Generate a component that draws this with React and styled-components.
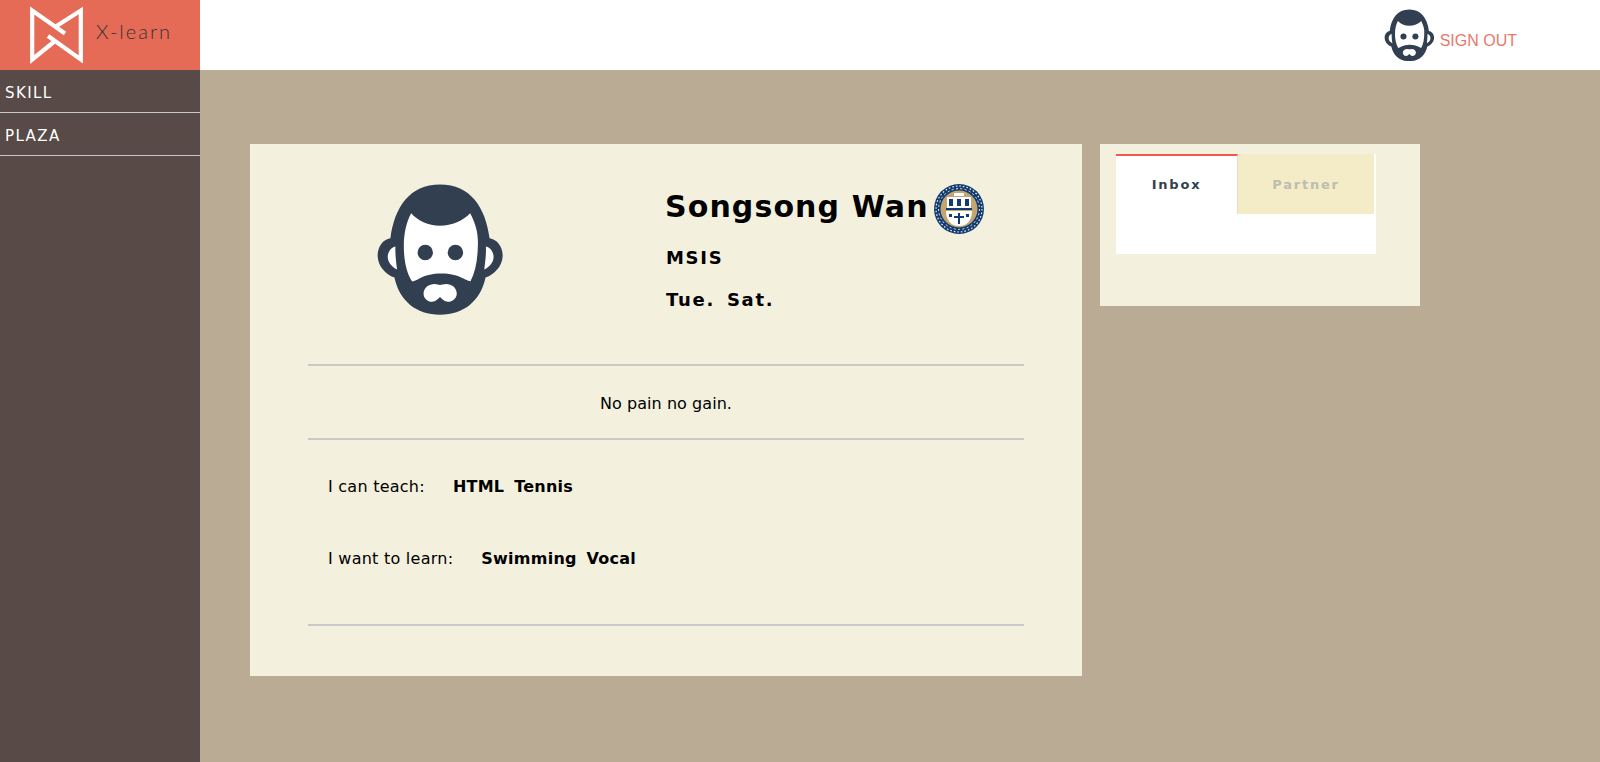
import React from "react";
import styled, { createGlobalStyle } from "styled-components";

const colors = {
  sand: "#b9ab94",
  cream: "#f3f0de",
  coral: "#e56b57",
  sidebar: "#574a47",
  slate: "#323f50",
  rule: "#c9c9c9",
};

const GlobalStyle = createGlobalStyle`
  html, body { margin: 0; padding: 0; height: 100%; }
  body {
    background: ${colors.sand};
    font-family: "DejaVu Sans", Verdana, sans-serif;
    color: #000;
  }
`;

function Face({ size }) {
  return (
    <svg width={size} height={size * 1.03} viewBox="50 38 385 396" aria-hidden="true">
      <path
        fill={colors.slate}
        d="M241 42C150 42 105 110 93 203C70 206 54 230 55 256C56 285 78 310 105 320C120 390 170 431 241 431C312 431 362 390 377 320C404 310 427 285 428 256C429 230 412 206 389 203C377 110 332 42 241 42Z"
      />
      <path
        fill="#fff"
        d="M155 128C175 150 205 165 241 165C277 165 310 150 331 128C348 160 356 190 354 225C353 265 348 300 332 331C315 330 300 308 245 308C190 308 175 330 158 332C140 305 133 265 133 225C133 190 140 155 155 128Z"
      />
      <circle cx="197" cy="245" r="23" fill={colors.slate} />
      <circle cx="287" cy="245" r="23" fill={colors.slate} />
      <path
        fill="#fff"
        d="M192 368C192 350 208 339 225 339C232 339 237 342 241 342C245 342 252 339 259 339C276 339 291 350 291 368C291 382 278 392 265 392C254 392 247 384 241 378C235 384 228 392 217 392C204 392 192 382 192 368Z"
      />
      <path fill="#fff" d="M108 227C94 230 85 245 85 258C85 275 97 288 113 296C110 275 107 250 108 227Z" />
      <path fill="#fff" d="M378 227C392 230 401 245 401 258C401 275 389 288 373 296C376 275 379 250 378 227Z" />
    </svg>
  );
}

function LogoMark() {
  return (
    <svg width="53" height="58" viewBox="0 0 53 58" aria-hidden="true">
      <g fill="none" stroke="#fff" strokeWidth="4.2" strokeLinejoin="miter">
        <path d="M35 27.5L2.2 4.5V53.5L25 35" />
        <path d="M18 30L50.8 53.5V4.5L25 21" />
      </g>
    </svg>
  );
}

function Seal() {
  return (
    <svg width="50" height="50" viewBox="0 0 50 50" aria-hidden="true">
      <circle cx="25" cy="25" r="25" fill="#123a73" />
      <circle cx="25" cy="25" r="23" fill="none" stroke="#f3f0de" strokeWidth="1.2" strokeDasharray="1.6 2" />
      <circle cx="25" cy="25" r="20.4" fill="none" stroke="#f3f0de" strokeWidth="1" strokeDasharray="2 2.4" />
      <circle cx="25" cy="25" r="18.5" fill="#c2a56f" />
      <path fill="#fff" d="M20 9h10v3h-10z" />
      <path fill="#fff" d="M13 13h24v11H13z" />
      <path fill="#123a73" d="M15 15h4v7h-4zM23 15h4v7h-4zM31 15h4v7h-4z" />
      <path fill="#123a73" d="M12 24h26v2H12z" />
      <path fill="#fff" d="M12 27h26c0 9-5 15-13 15s-13-6-13-15z" />
      <path fill="#123a73" d="M24 29h2v11h-2zM20 32h10v2H20zM15 30h3v3h-3zM32 30h3v3h-3z" />
    </svg>
  );
}

const Page = styled.div`
  display: grid;
  grid-template-columns: 200px 1fr;
  grid-template-rows: 70px 1fr;
  height: 762px;
  overflow: hidden;
`;

const Brand = styled.div`
  background: ${colors.coral};
  display: flex;
  align-items: center;
  padding-left: 30px;
  gap: 13px;
`;

const BrandName = styled.span`
  font-family: Lato, sans-serif;
  font-weight: 300;
  font-size: 20px;
  letter-spacing: 2px;
  color: #333;
  margin-top: -8px;
`;

const TopBar = styled.header`
  background: #fff;
  display: flex;
  justify-content: flex-end;
  align-items: center;
  padding-right: 83px;
  gap: 5px;
`;

const SignOut = styled.a`
  font-family: "Liberation Sans", Arial, sans-serif;
  font-size: 16px;
  color: #e8796a;
  margin-top: 11px;
`;

const Sidebar = styled.nav`
  background: ${colors.sidebar};
`;

const NavItem = styled.div`
  height: 40px;
  padding-top: 2px;
  line-height: 42px;
  padding-left: 5px;
  font-size: 15px;
  letter-spacing: 1.4px;
  color: #fff;
  border-bottom: 1px solid ${colors.rule};
`;

const Main = styled.main`
  display: flex;
  align-items: flex-start;
  gap: 18px;
  padding: 74px 0 0 50px;
`;

const ProfileCard = styled.section`
  width: 832px;
  height: 532px;
  background: ${colors.cream};
  padding: 0 58px;
  box-sizing: border-box;
`;

const Intro = styled.div`
  display: flex;
  height: 222px;
  padding-top: 40px;
  box-sizing: border-box;
  border-bottom: 2px solid ${colors.rule};
`;

const AvatarSlot = styled.div`
  width: 357px;
  padding-left: 68px;
  margin-top: -1px;
  box-sizing: border-box;
`;

const Details = styled.div`
  display: flex;
  flex-direction: column;
`;

const NameRow = styled.div`
  display: flex;
  align-items: flex-start;
  gap: 5px;
`;

const Name = styled.h1`
  margin: 0;
  font-size: 30px;
  font-weight: 700;
  letter-spacing: 1.1px;
  line-height: 46px;
`;

const Fact = styled.p`
  margin: ${(p) => p.$gap}px 0 0 1px;
  font-size: 18px;
  font-weight: 700;
  letter-spacing: 1.7px;
  word-spacing: 4px;
  line-height: 20px;
`;

const Motto = styled.p`
  margin: 0;
  height: 72px;
  line-height: 76px;
  text-align: center;
  font-size: 16px;
  letter-spacing: 0.05px;
  border-bottom: 2px solid ${colors.rule};
`;

const Skills = styled.div`
  height: 186px;
  padding: 11px 0 0 20px;
  box-sizing: border-box;
  border-bottom: 2px solid ${colors.rule};
`;

const SkillRow = styled.div`
  display: flex;
  height: 71.5px;
  align-items: center;
  font-size: 16px;
  letter-spacing: 0.25px;
`;

const SkillLabel = styled.span`
  margin-right: 28px;
`;

const SkillNames = styled.strong`
  word-spacing: 4px;
`;

const SidePanel = styled.aside`
  width: 320px;
  height: 162px;
  background: ${colors.cream};
  padding: 10px 0 0 16px;
  box-sizing: border-box;
`;

const TabBox = styled.div`
  width: 260px;
  height: 100px;
  background: #fff;
  display: flex;
  align-items: flex-start;
`;

const Tab = styled.div`
  box-sizing: border-box;
  height: 60px;
  line-height: 58px;
  text-align: center;
  font-size: 13px;
  font-weight: 700;
  letter-spacing: 1.8px;
  width: ${(p) => (p.$active ? 122 : 136)}px;
  color: ${(p) => (p.$active ? colors.slate : "#bdbdb0")};
  background: ${(p) => (p.$active ? "#fff" : "#f3ecc6")};
  border-top: 2px solid ${(p) => (p.$active ? "#f5564e" : "#f3ecc6")};
  border-right: ${(p) => (p.$active ? "1px solid #f8d5cc" : "none")};
`;

export default function App() {
  return (
    <>
      <GlobalStyle />
      <Page>
        <Brand>
          <LogoMark />
          <BrandName>X-learn</BrandName>
        </Brand>
        <TopBar>
          <Face size={51} />
          <SignOut>SIGN OUT</SignOut>
        </TopBar>
        <Sidebar>
          <NavItem>SKILL</NavItem>
          <NavItem>PLAZA</NavItem>
        </Sidebar>
        <Main>
          <ProfileCard>
            <Intro>
              <AvatarSlot>
                <Face size={129} />
              </AvatarSlot>
              <Details>
                <NameRow>
                  <Name>Songsong Wan</Name>
                  <Seal />
                </NameRow>
                <Fact $gap={14}>MSIS</Fact>
                <Fact $gap={22}>Tue. Sat.</Fact>
              </Details>
            </Intro>
            <Motto>No pain no gain.</Motto>
            <Skills>
              <SkillRow>
                <SkillLabel>I can teach:</SkillLabel>
                <SkillNames>HTML Tennis</SkillNames>
              </SkillRow>
              <SkillRow>
                <SkillLabel>I want to learn:</SkillLabel>
                <SkillNames>Swimming Vocal</SkillNames>
              </SkillRow>
            </Skills>
          </ProfileCard>
          <SidePanel>
            <TabBox>
              <Tab $active>Inbox</Tab>
              <Tab>Partner</Tab>
            </TabBox>
          </SidePanel>
        </Main>
      </Page>
    </>
  );
}
